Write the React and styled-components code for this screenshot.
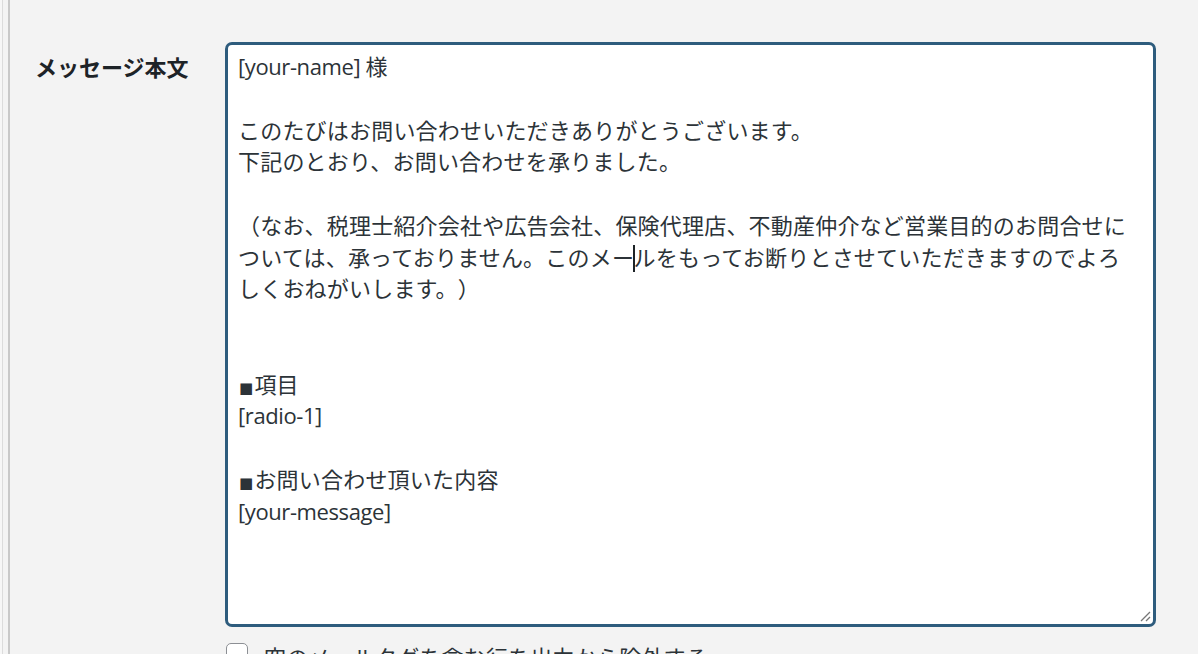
import React from "react";
import styled, { createGlobalStyle } from "styled-components";

const GlobalStyle = createGlobalStyle`
  html, body {
    margin: 0;
    padding: 0;
    background: #f3f3f3;
    overflow: hidden;
  }
  body {
    font-family: "Open Sans", "Noto Sans CJK JP", sans-serif;
    color: #2c3338;
  }
`;

const lines = [
  "[your-name] 様",
  "",
  "このたびはお問い合わせいただきありがとうございます。",
  "下記のとおり、お問い合わせを承りました。",
  "",
  "（なお、税理士紹介会社や広告会社、保険代理店、不動産仲介など営業目的のお問合せに",
  "CARET",
  "しくおねがいします。）",
  "",
  "",
  "■項目",
  "[radio-1]",
  "",
  "■お問い合わせ頂いた内容",
  "[your-message]",
];

// latin runs get tighter spacing than the kana/kanji around them
const splitRuns = (text) =>
  text.split(/([\x20-\x7e]+)/).map((part, i) =>
    /^[\x20-\x7e]+$/.test(part) ? <Latin key={i}>{part}</Latin> : part
  );

const renderLine = (line) => {
  if (!line) return "\u00a0";
  if (line.startsWith("■")) {
    return (
      <>
        <Square>■</Square>
        {splitRuns(line.slice(1))}
      </>
    );
  }
  return splitRuns(line);
};

const App = () => {
  return (
    <>
      <GlobalStyle />
      <Page lang="ja">
        <AdminEdge />
        <Row>
          <Label>メッセージ本文</Label>
          <Field>
            <TextBox>
              {lines.map((line, i) =>
                line === "CARET" ? (
                  <Line key={i}>
                    ついては、承っておりません。このメー
                    <Caret />
                    ルをもってお断りとさせていただきますのでよろ
                  </Line>
                ) : (
                  <Line key={i}>{renderLine(line)}</Line>
                )
              )}
              <Grip width="12" height="12" viewBox="0 0 12 12">
                <path d="M11 2 L2 11 M11 7 L7 11" stroke="#777" strokeWidth="1.3" fill="none" />
              </Grip>
            </TextBox>
            <CheckRow>
              <Check />
              <CheckText>空のメールタグを含む行を出力から除外する</CheckText>
            </CheckRow>
          </Field>
        </Row>
      </Page>
    </>
  );
};

export default App;

const Page = styled.div`
  display: flex;
  width: 1198px;
  height: 654px;
  overflow: hidden;
  text-spacing-trim: space-all;
`;

const AdminEdge = styled.div`
  width: 10px;
  flex-shrink: 0;
  box-sizing: border-box;
  border-left: 2px solid #f7f7f7;
  border-right: 2px solid #c9c9c9;
  background: linear-gradient(to right, #dcdcdc 0 1px, #f4f4f4 1px);
`;

const Row = styled.div`
  display: flex;
  align-items: flex-start;
  padding-top: 42px;
`;

const Label = styled.div`
  width: 189px;
  padding-left: 25px;
  padding-top: 10px;
  box-sizing: border-box;
  font-size: 22px;
  font-weight: 700;
  line-height: 31.75px;
  color: #1d2327;
  white-space: nowrap;
`;

const Field = styled.div`
  display: flex;
  flex-direction: column;
  margin-left: 26px;
`;

const TextBox = styled.div`
  position: relative;
  flex-shrink: 0;
  width: 931px;
  height: 585px;
  box-sizing: border-box;
  border: 3px solid #2e5c7d;
  border-radius: 7px;
  background: #fff;
  padding: 6px 10px;
  font-size: 22px;
  letter-spacing: 0.2px;
  line-height: 31.75px;
  color: #2c3338;
`;

const Line = styled.div`
  white-space: pre;
  height: 31.75px;
`;

const Latin = styled.span`
  letter-spacing: -0.4px;
`;

const Square = styled.span`
  font-family: "DejaVu Sans", sans-serif;
  font-size: 15px;
  line-height: 0;
  margin: 0 1px;
`;

const Caret = styled.span`
  display: inline-block;
  width: 1.5px;
  height: 27px;
  background: #1d2327;
  vertical-align: -6px;
  margin: 0 -1px;
`;

const Grip = styled.svg`
  position: absolute;
  right: 2px;
  bottom: 2px;
`;

const CheckRow = styled.div`
  display: flex;
  align-items: flex-start;
  gap: 16px;
  margin-top: 16px;
  padding-left: 1px;
`;

const Check = styled.span`
  width: 22px;
  height: 22px;
  box-sizing: border-box;
  border: 1.5px solid #8c8f94;
  border-radius: 5px;
  background: #fff;
  flex-shrink: 0;
`;

const CheckText = styled.span`
  font-size: 22px;
  letter-spacing: 0.2px;
  line-height: 31.75px;
  margin-top: -1px;
  color: #2c3338;
`;
